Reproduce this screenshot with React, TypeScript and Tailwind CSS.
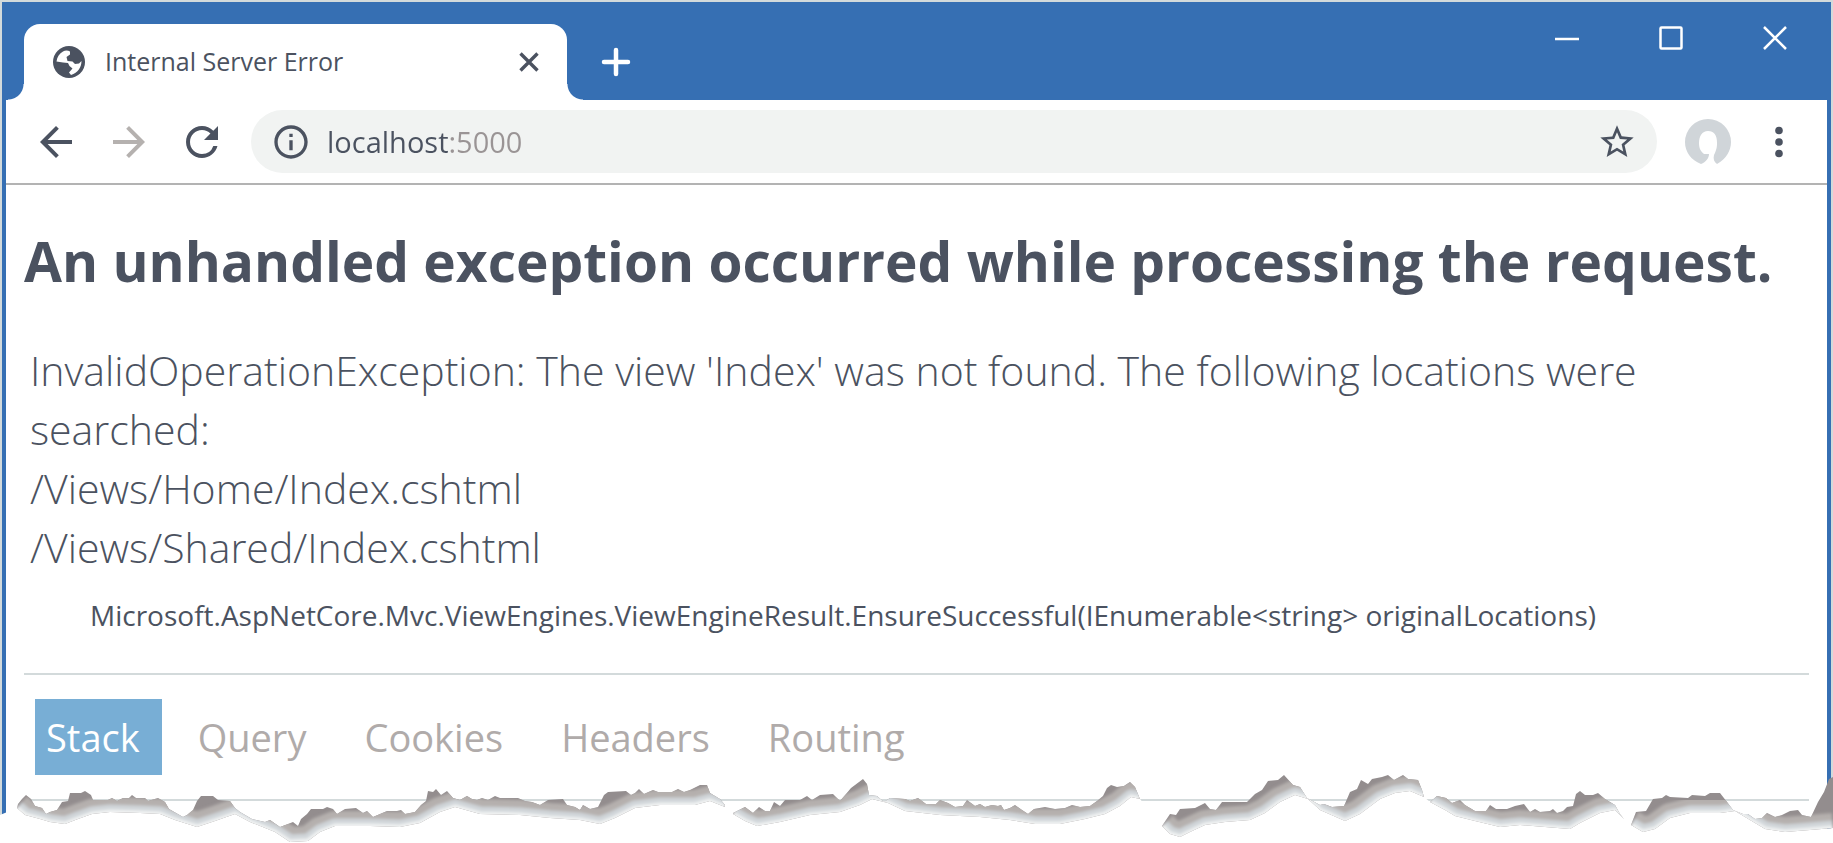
import React from 'react';
import { MdArrowBack, MdArrowForward, MdInfoOutline, MdRefresh, MdStarBorder } from 'react-icons/md';

const TABS = ['Query', 'Cookies', 'Headers', 'Routing'];

type Tear = { top: string; bottom: string };

const TEARS: Tear[] = [
  {
    top: '18,802 22,797 26,793 31,797 35,804 42,806 46,812 50,810 57,808 62,800 68,799 70,791 81,791 85,789 91,793 93,798 108,798 112,796 117,799 123,796 129,796 132,793 136,796 145,796 148,799 158,796 165,800 169,807 183,815 187,813 193,808 197,799 201,794 213,794 218,798 230,799 235,806 240,810 252,817 265,820 270,818 280,825 288,822 293,820 298,824 301,817 307,812 311,807 323,807 327,805 333,807 337,812 345,807 356,806 363,811 367,809 373,815 380,812 387,809 397,809 401,808 405,812 415,810 421,803 426,799 428,789 433,790 436,787 441,793 447,789 453,796 460,798 467,794 472,797 477,798 482,796 488,798 495,794 500,796 518,796 525,799 532,800 540,803 548,798 563,797 567,803 575,805 580,808 583,803 590,807 598,805 601,799 604,793 608,790 626,789 631,793 635,791 639,787 644,792 653,788 658,790 672,790 678,787 684,790 690,788 700,783 707,783 710,791 720,797 725,803',
    bottom: '17,806 25,813 40,817 50,820 65,822 78,817 92,812 110,810 140,811 160,812 175,818 197,825 215,819 235,812 250,820 275,830 290,840 308,839 320,830 335,824 370,824 400,825 420,821 440,810 455,805 480,812 520,813 550,816 580,818 600,822 615,816 635,806 660,803 695,803 710,799 725,805',
  },
  {
    top: '733,811 745,805 749,808 753,811 759,805 765,809 770,809 774,800 780,804 785,798 800,798 807,794 812,798 820,793 833,792 840,799 846,792 851,786 863,777 867,782 869,793 877,794 884,800 890,796 905,797 910,799 918,796 926,802 936,802 940,798 948,801 955,805 963,804 967,798 975,804 980,802 985,805 992,803 998,804 1001,803 1004,808 1010,806 1015,803 1022,808 1028,812 1034,807 1045,805 1055,807 1065,806 1072,803 1080,805 1090,804 1097,799 1103,794 1107,786 1111,783 1117,785 1124,784 1130,780 1135,785 1140,797',
    bottom: '733,812 745,819 757,824 780,820 810,813 840,810 860,803 872,797 888,801 905,809 940,813 980,815 1010,818 1035,822 1060,822 1085,817 1105,812 1120,804 1131,795 1140,797',
  },
  {
    top: '1162,824 1170,812 1176,813 1180,807 1195,806 1205,801 1210,807 1216,808 1222,800 1247,800 1255,792 1262,788 1268,779 1278,778 1284,773 1293,783 1300,785 1307,796 1320,803 1324,802 1332,805 1344,804 1350,790 1357,787 1361,778 1368,782 1372,777 1382,775 1388,773 1394,778 1403,773 1408,777 1418,778 1422,788 1424,795',
    bottom: '1162,824 1170,832 1180,835 1190,830 1205,823 1225,820 1250,818 1265,811 1280,800 1295,793 1308,797 1320,808 1345,819 1360,812 1380,797 1395,791 1410,789 1424,795',
  },
  {
    top: '1430,800 1437,794 1446,796 1452,801 1460,798 1465,803 1475,809 1486,809 1490,803 1496,807 1507,807 1515,804 1524,802 1530,810 1535,807 1540,810 1550,809 1553,807 1557,811 1563,809 1567,805 1573,804 1576,792 1580,789 1585,793 1593,793 1598,791 1605,797 1615,803 1620,812',
    bottom: '1430,800 1445,808 1455,814 1475,819 1500,825 1520,823 1545,825 1570,827 1580,821 1600,811 1615,808 1624,817',
  },
  {
    top: '1631,823 1636,810 1646,809 1653,797 1662,796 1666,793 1670,795 1688,796 1692,793 1705,794 1710,791 1720,791 1727,800 1733,808 1743,812 1748,812 1755,817 1762,816 1767,811 1775,815 1782,813 1790,809 1798,808 1802,813 1811,815 1818,800 1824,790 1829,777 1833,775',
    bottom: '1631,823 1643,830 1655,827 1670,816 1690,811 1720,811 1735,809 1750,818 1765,827 1785,830 1810,828 1833,826',
  },
];

const reversed = (points: string) => points.split(' ').reverse().join(' ');

function TornEdge() {
  return (
    <svg
      aria-hidden="true"
      viewBox="0 763 1833 80"
      preserveAspectRatio="none"
      className="pointer-events-none absolute bottom-0 left-0 h-20 w-full"
    >
      <defs>
        <filter id="soft" x="-5%" y="-50%" width="110%" height="200%">
          <feGaussianBlur stdDeviation="1.5" />
        </filter>
        {TEARS.map((t, i) => (
          <clipPath id={`tear-${i}`} key={i}>
            <polygon points={`${t.top} ${reversed(t.bottom)}`} />
          </clipPath>
        ))}
      </defs>
      <polygon fill="#fff" points={`0,813 ${TEARS.map((t) => t.bottom).join(' ')} 1833,843 0,843`} />
      {TEARS.map((t, i) => (
        <g key={i} clipPath={`url(#tear-${i})`} fill="none" strokeLinejoin="round">
          <rect x="0" y="763" width="1833" height="80" fill="#938d8e" />
          <g filter="url(#soft)">
            <polyline points={t.bottom} stroke="#b5b0ae" strokeWidth="30" />
            <polyline points={t.bottom} stroke="#d0d5d9" strokeWidth="15" />
            <polyline points={t.bottom} stroke="#f1f3f3" strokeWidth="5" />
          </g>
        </g>
      ))}
    </svg>
  );
}

function TitleBar() {
  return (
    <header className="flex h-[98px] bg-[#366fb3] text-white">
      <div className="flex w-full items-end pl-[2px]">
        <div className="h-4 w-4 bg-[radial-gradient(circle_at_0_0,#366fb3_15px,#fff_16px)]" />
        <div className="flex h-[76px] w-[543px] items-center rounded-t-[16px] bg-white pr-7 pl-[29px] text-[#4b5260]">
          <svg viewBox="0 0 32 32" className="mr-5 h-8 w-8" aria-hidden="true">
            <circle cx="16" cy="16" r="16" fill="#4b5260" />
            <path
              fill="#fff"
              d="M10 5.500C12 4 15 4 17 5.500L17 8.500 13.500 11 14.500 15 19.500 15.500 22 18 26 17.500 28.500 15C28.500 21 25 27 18 29L16 26.500 19.500 22.500 16.500 20 15 17 10 16.500 3.500 15.500C4 11 6.500 7.500 10 5.500Z"
            />
          </svg>
          <h1 className="grow text-[25px]">Internal Server Error</h1>
          <button type="button" aria-label="Close tab">
            <svg viewBox="0 0 20 20" className="h-5 w-5" stroke="currentColor" strokeWidth="3.4">
              <path d="M1.500 1.500l17 17M18.500 1.500l-17 17" />
            </svg>
          </button>
        </div>
        <div className="h-4 w-4 bg-[radial-gradient(circle_at_100%_0,#366fb3_15px,#fff_16px)]" />
        <button type="button" aria-label="New tab" className="mb-[22px] ml-[17px]">
          <svg viewBox="0 0 32 32" className="h-8 w-8" stroke="currentColor" strokeWidth="4.5" strokeLinecap="round">
            <path d="M16 4v24M4 16h24" />
          </svg>
        </button>
      </div>
      <div className="flex shrink-0 items-start gap-20 pt-6 pr-10">
        <button type="button" aria-label="Minimize">
          <svg viewBox="0 0 24 24" className="h-6 w-6" stroke="currentColor" strokeWidth="2.5">
            <path d="M0 13h24" />
          </svg>
        </button>
        <button type="button" aria-label="Maximize">
          <svg viewBox="0 0 24 24" className="h-6 w-6" fill="none" stroke="currentColor" strokeWidth="2.5">
            <rect x="1.500" y="1.500" width="21" height="21" rx="1" />
          </svg>
        </button>
        <button type="button" aria-label="Close window">
          <svg viewBox="0 0 24 24" className="h-6 w-6" stroke="currentColor" strokeWidth="2.5">
            <path d="M1 1l22 22M23 1L1 23" />
          </svg>
        </button>
      </div>
    </header>
  );
}

function Toolbar() {
  return (
    <nav className="flex h-[85px] items-center border-b-2 border-[#b3b3b3] pr-9 pl-[26px] text-[#4b5260]">
      <div className="flex gap-[25px]">
        <button type="button" aria-label="Back">
          <MdArrowBack className="h-12 w-12" />
        </button>
        <button type="button" aria-label="Forward" className="text-[#b5b1af]">
          <MdArrowForward className="h-12 w-12" />
        </button>
        <button type="button" aria-label="Reload">
          <MdRefresh className="h-12 w-12" />
        </button>
      </div>
      <div className="ml-[25px] flex h-[63px] grow items-center rounded-full bg-[#f1f3f2] px-5">
        <MdInfoOutline className="h-10 w-10 shrink-0" />
        <input
          type="text"
          aria-label="Address"
          defaultValue="localhost:5000"
          className="ml-4 h-12 min-w-0 grow bg-[linear-gradient(90deg,#4b5260_122px,#9a9495_122px)] bg-clip-text text-[29px] text-transparent outline-none"
        />
        <button type="button" aria-label="Bookmark this page">
          <MdStarBorder className="h-10 w-10" />
        </button>
      </div>
      <button type="button" aria-label="Profile" className="ml-7">
        <svg viewBox="0 0 46 46" className="h-[46px] w-[46px]">
          <path
            fill="#d0d5d9"
            d="M16 45C6 41 0 33 0 23a23 23 0 1 1 46 0c0 9-5 17-14 22-3-2-4-5-3-9 3-6 3-9 3-12 0-8-3-12-9-12s-9 5-9 12c0 4 1 8 5 11l5 0c0 4-3 8-8 10z"
          />
        </svg>
      </button>
      <button type="button" aria-label="Menu" className="ml-9">
        <svg viewBox="0 0 24 32" className="h-8 w-6" fill="currentColor">
          <circle cx="12" cy="4.500" r="3.800" />
          <circle cx="12" cy="16" r="3.800" />
          <circle cx="12" cy="27.500" r="3.800" />
        </svg>
      </button>
    </nav>
  );
}

export default function App() {
  return (
    <div className="relative bg-[#d3dadb] px-[2px] pt-[2px] font-['Open_Sans','Noto_Sans',sans-serif]">
      <div className="border-x-4 border-[#366fb3] bg-white">
        <TitleBar />
        <Toolbar />
        <main className="px-[18px] pt-[38px] pb-11">
          <h2 className="text-[55px] leading-[76px] font-bold whitespace-nowrap text-[#4b5260]">
            An unhandled exception occurred while processing the request.
          </h2>
          <div className="mt-[42px] px-[6px] text-[41px] leading-[59px] font-light text-[#4b5260]">
            <p>InvalidOperationException: The view 'Index' was not found. The following locations were searched:</p>
            <p>/Views/Home/Index.cshtml</p>
            <p>/Views/Shared/Index.cshtml</p>
          </div>
          <p className="mt-[18px] pl-[66px] text-[28px] leading-10 whitespace-nowrap text-[#4b5260]">
            Microsoft.AspNetCore.Mvc.ViewEngines.ViewEngineResult.EnsureSuccessful(IEnumerable&lt;string&gt; originalLocations)
          </p>
          <div className="mt-[38px] flex border-y-2 border-[#d3dadb] px-[11px] py-6 text-[38px] leading-[76px]">
            <button type="button" className="mr-9 bg-[#78aed5] pr-[22px] pl-[11px] text-white">Stack</button>
            {TABS.map((tab) => (
              <button type="button" key={tab} className="mr-[58px] text-[#b0abaa]">{tab}</button>
            ))}
          </div>
        </main>
      </div>
      <TornEdge />
    </div>
  );
}
